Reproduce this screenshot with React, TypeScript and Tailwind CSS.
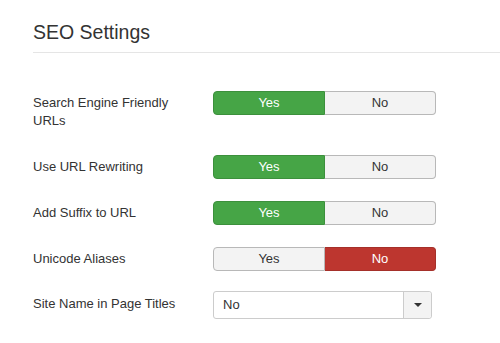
const toggles = [
  { label: "Search Engine Friendly URLs", value: "yes", mt: "mt-[38px]" },
  { label: "Use URL Rewriting", value: "yes", mt: "mt-[25px]" },
  { label: "Add Suffix to URL", value: "yes", mt: "mt-[22px]" },
  { label: "Unicode Aliases", value: "no", mt: "mt-[22px]" },
];

function Toggle({ value }: { value: string }) {
  const yes = value === "yes";
  return (
    <div className="flex h-[24px] w-[223px] text-[13px] leading-[22px]">
      <div
        className={
          yes
            ? "flex-1 rounded-l-[4px] border border-[#3c903c] bg-[#46a546] text-center text-white"
            : "flex-1 rounded-l-[4px] border border-[#b8b8b8] bg-[#f3f3f3] text-center text-[#333]"
        }
      >
        Yes
      </div>
      <div
        className={
          yes
            ? "flex-1 rounded-r-[4px] border border-l-0 border-[#b8b8b8] bg-[#f3f3f3] text-center text-[#333]"
            : "flex-1 rounded-r-[4px] border border-l-0 border-[#a5302a] bg-[#bd362f] text-center text-white"
        }
      >
        No
      </div>
    </div>
  );
}

export default function App() {
  return (
    <div className="h-[343px] overflow-hidden bg-white pt-[20px] pl-[33px] font-['Liberation_Sans',Arial,sans-serif] text-[#333]">
      <h2 className="border-b border-[#e5e5e5] pb-[8px] text-[19.5px] leading-[24px] font-normal">
        SEO Settings
      </h2>

      {toggles.map((t) => (
        <div key={t.label} className={`flex items-start ${t.mt}`}>
          <div className="w-[160px] pt-[3px] text-[13px] leading-[18px]">{t.label}</div>
          <div className="ml-[20px]">
            <Toggle value={t.value} />
          </div>
        </div>
      ))}

      <div className="mt-[20px] flex items-start">
        <div className="w-[160px] pt-[4px] text-[13px] leading-[18px]">Site Name in Page Titles</div>
        <div className="ml-[20px] flex h-[28px] w-[219px] rounded-[3px] border border-[#cccccc] bg-white">
          <div className="flex-1 pl-[9px] text-[13px] leading-[26px]">No</div>
          <div className="flex w-[28px] items-center justify-center rounded-r-[3px] border-l border-[#cccccc] bg-[#f3f3f3]">
            <div className="h-0 w-0 border-x-[4px] border-t-[4px] border-x-transparent border-t-[#333]" />
          </div>
        </div>
      </div>
    </div>
  );
}
